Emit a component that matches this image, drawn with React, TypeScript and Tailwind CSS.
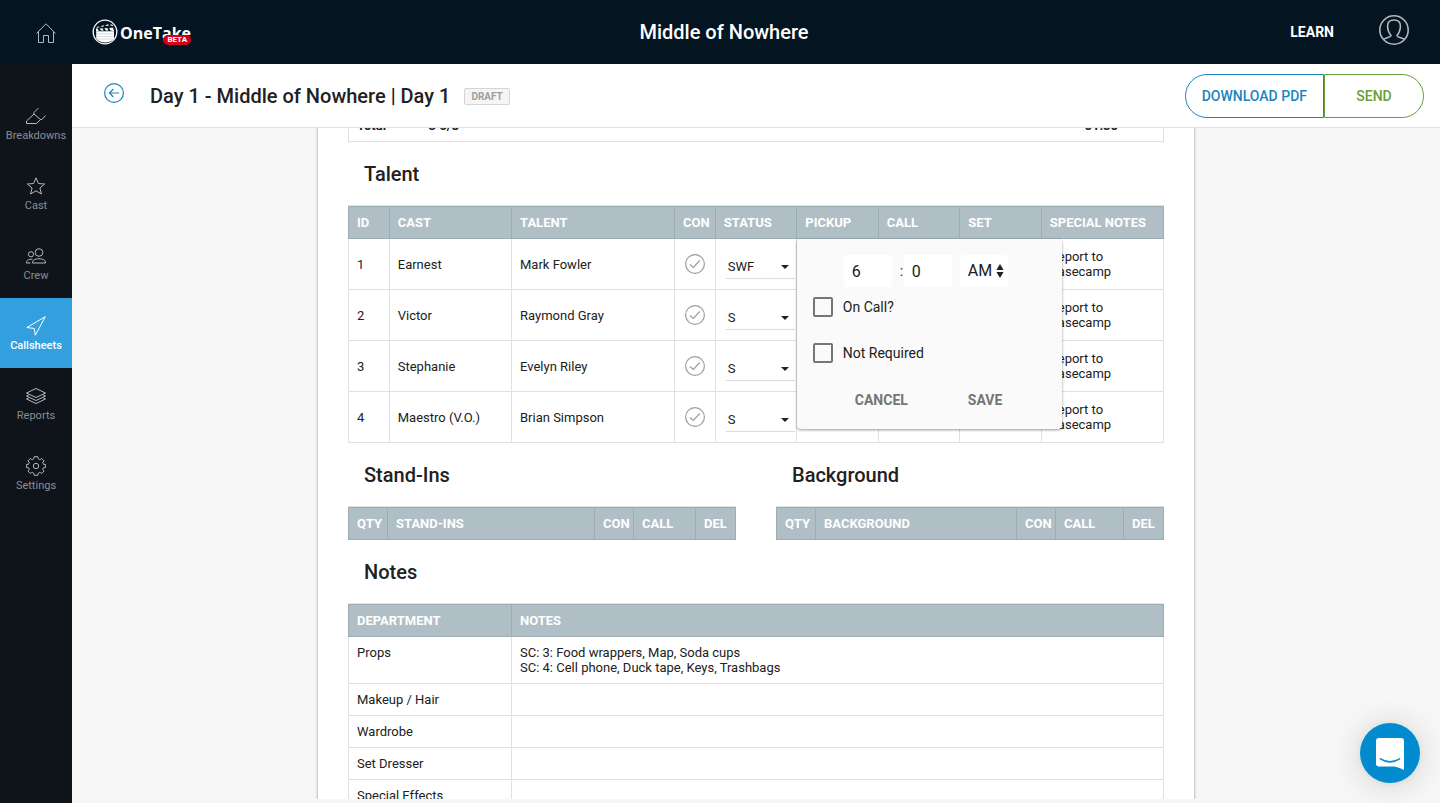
import { useState, type ReactNode } from "react";
import clsx from "clsx";

type NavItem = { label: string; icon: ReactNode };

const iconProps = {
  viewBox: "0 0 20 20",
  fill: "none",
  stroke: "currentColor",
  strokeWidth: 1,
  className: "h-5 w-5",
  "aria-hidden": true,
} as const;

const navItems: NavItem[] = [
  {
    label: "Breakdowns",
    icon: (
      <svg {...iconProps}>
        <path d="M12.5 2 L8 6.5 V8 L0.5 15 V17.5 H10.5 L14.5 13.5 H16 L19.5 9.5 M8 8 L14.5 13.5" />
      </svg>
    ),
  },
  {
    label: "Cast",
    icon: (
      <svg {...iconProps}>
        <path d="M10 1.8 L12.4 7.5 L18.6 8 L13.9 12 L15.4 18 L10 14.8 L4.6 18 L6.1 12 L1.4 8 L7.6 7.5 Z" />
      </svg>
    ),
  },
  {
    label: "Crew",
    icon: (
      <svg {...iconProps}>
        <circle cx="13" cy="6.5" r="3.8" />
        <circle cx="5" cy="8.3" r="2.6" />
        <path d="M6.5 17 C6.5 14 9 12.8 13 12.8 S19.5 14 19.5 17 Z" />
        <path d="M4.5 17 H0.5 C0.5 14.3 2 13.2 6.5 13.2" />
      </svg>
    ),
  },
  {
    label: "Callsheets",
    icon: (
      <svg {...iconProps}>
        <path d="M19.3 0.7 L0.8 11.5 L8.3 12.5 L9.3 19.3 Z" />
      </svg>
    ),
  },
  {
    label: "Reports",
    icon: (
      <svg {...iconProps}>
        <path d="M10 2.5 L19.5 7 L10 11.5 L0.5 7 Z" />
        <path d="M3 8.7 L0.5 10 L10 14.5 L19.5 10 L17 8.7 M3 11.7 L0.5 13 L10 17.5 L19.5 13 L17 11.7" />
      </svg>
    ),
  },
  {
    label: "Settings",
    icon: (
      <svg {...iconProps}>
        <circle cx="10" cy="10" r="2.7" />
        <path d="M8.2 0.7 H11.8 Q11.8 3.4 13.6 3.6 Q15 3.6 15.6 2.4 L18 4.8 Q16.2 6.4 17 7.8 Q17.6 8.6 19.4 8.4 V11.6 Q17.6 11.4 17 12.2 Q16.2 13.6 18 15.2 L15.6 17.6 Q15 16.4 13.6 16.4 Q11.8 16.6 11.8 19.3 H8.2 Q8.2 16.6 6.4 16.4 Q5 16.4 4.4 17.6 L2 15.2 Q3.8 13.6 3 12.2 Q2.4 11.4 0.6 11.6 V8.4 Q2.4 8.6 3 7.8 Q3.8 6.4 2 4.8 L4.4 2.4 Q5 3.6 6.4 3.6 Q8.2 3.4 8.2 0.7 Z" />
      </svg>
    ),
  },
];

const talent = [
  { id: 1, cast: "Earnest", name: "Mark Fowler", status: "SWF" },
  { id: 2, cast: "Victor", name: "Raymond Gray", status: "S" },
  { id: 3, cast: "Stephanie", name: "Evelyn Riley", status: "S" },
  { id: 4, cast: "Maestro (V.O.)", name: "Brian Simpson", status: "S" },
];

const notes = [
  {
    department: "Props",
    lines: [
      "SC: 3: Food wrappers, Map, Soda cups",
      "SC: 4: Cell phone, Duck tape, Keys, Trashbags",
    ],
  },
  { department: "Makeup / Hair", lines: [] },
  { department: "Wardrobe", lines: [] },
  { department: "Set Dresser", lines: [] },
  { department: "Special Effects", lines: [] },
];

function Logo() {
  return (
    <a href="#projects" aria-label="OneTake beta" className="relative flex items-center">
      <svg viewBox="0 0 26 26" className="h-[26px] w-[26px]" aria-hidden>
        <circle cx="13" cy="13" r="11.8" fill="none" stroke="#fff" strokeWidth="1.3" />
        <path d="M4.2 12.2 H22 V20 Q18 23.5 13 23.5 Q7.5 23.5 4.2 19.5 Z" fill="#fff" />
        <path d="M4.5 14.8 H21.5 M4.5 17.4 H21.5 M5 20 H21" stroke="#b9c0c6" strokeWidth="0.6" />
        <path
          d="M4 12.2 V9.6 L5.6 9.4 L7 12.2 Z M9 11.6 L7.6 9.4 L10.4 9.2 L11.8 11.6 Z M13.8 11.6 L12.4 9.2 L15.2 9 L16.6 11.6 Z M18.4 11.6 L17.2 9 L21 8.6 L22 12.2 Z"
          fill="#fff"
        />
        <path
          d="M4 8.2 L6 7.4 L8 8 L6 8.8 Z M8.6 7.4 L10.4 6.4 L12.6 6.6 L11 7.8 Z M13.4 6.8 L15 5.6 L17.2 5.8 L15.6 7 Z M18 6.2 L19 5.2 L21 6 V7 Z"
          fill="#fff"
        />
      </svg>
      <span className="ml-0.5 pt-0.5 font-['Open_Sans',sans-serif] text-base leading-6 font-bold text-white">
        OneTake
      </span>
      <span className="absolute right-0 bottom-0 rounded-full bg-[#d0021b] px-1 text-[8px] leading-[10px] font-bold text-white">
        BETA
      </span>
    </a>
  );
}

function TopBar() {
  return (
    <header className="grid h-16 shrink-0 grid-cols-[1fr_auto_1fr] items-center bg-[#041421] pl-2">
      <div className="flex items-center gap-9 pl-7">
        <a href="#home" aria-label="Home" className="pt-0.5 text-[#b4b9bd]">
          <svg {...iconProps}>
            <path d="M0.5 10.5 L10 0.8 L19.5 10.5 M2.5 8.5 V19.5 H7.5 V12.5 H12.5 V19.5 H17.5 V8.5" />
          </svg>
        </a>
        <Logo />
      </div>
      <h1 className="text-xl font-medium text-white">Middle of Nowhere</h1>
      <div className="flex items-center justify-end gap-[45px] pr-[31px] pb-1">
        <a href="#learn" className="pt-1 text-sm font-bold text-white">
          LEARN
        </a>
        <button type="button" aria-label="Account" className="text-[#b4b9bd]">
          <svg
            viewBox="0 0 30 30"
            fill="none"
            stroke="currentColor"
            strokeWidth="1.6"
            className="h-[30px] w-[30px]"
            aria-hidden
          >
            <circle cx="15" cy="15" r="14.2" />
            <path d="M4.5 24.5 C6.5 22.8 12 22.4 12 20.5 C9.5 17.5 8.6 14.5 8.6 11 C8.6 7.2 11.2 5 15 5 S21.4 7.2 21.4 11 C21.4 14.5 20.5 17.5 18 20.5 C18 22.4 23.5 22.8 25.5 24.5" />
          </svg>
        </button>
      </div>
    </header>
  );
}

function SideNav({ active }: { active: string }) {
  return (
    <nav className="w-18 shrink-0 bg-[#0f141b] pt-6">
      {navItems.map((item) => (
        <a
          key={item.label}
          href={`#${item.label.toLowerCase()}`}
          className={clsx(
            "flex h-[70px] flex-col items-center justify-center gap-0.5 pt-1 text-[11px] leading-4",
            item.label === active ? "bg-[#349fde] font-medium text-white" : "text-[#8b8e91]"
          )}
        >
          <span className={item.label === active ? "text-white" : "text-[#b4b9bd]"}>{item.icon}</span>
          {item.label}
        </a>
      ))}
    </nav>
  );
}

function PageBar() {
  return (
    <div className="flex h-16 shrink-0 items-center border-b border-[#e0e0e0] bg-white pr-4 pl-8">
      <button type="button" aria-label="Back" className="mb-1.5 text-[#1c84bd]">
        <svg {...iconProps}>
          <circle cx="10" cy="10" r="9.4" strokeWidth="1.2" />
          <path d="M15 10 H5.6 M9.4 6 L5.4 10 L9.4 14" strokeWidth="1.2" />
        </svg>
      </button>
      <h2 className="ml-[26px] text-xl font-medium">Day 1 - Middle of Nowhere | Day 1</h2>
      <span className="mt-0.5 ml-3.5 rounded-xs border border-[#d5d5d5] bg-[#f5f5f5] px-1.5 text-[10px] leading-[15px] font-bold text-[#9e9e9e]">
        DRAFT
      </span>
      <div className="ml-auto flex h-11 text-sm font-medium">
        <button type="button" className="rounded-l-[22px] border border-[#1c84bd] px-4 text-[#1c84bd]">
          DOWNLOAD PDF
        </button>
        <button type="button" className="w-[100px] rounded-r-[22px] border border-[#689f38] text-[#689f38]">
          SEND
        </button>
      </div>
    </div>
  );
}

function SectionTitle({ children }: { children: ReactNode }) {
  return <h3 className="px-4 pt-5 pb-[19px] text-xl leading-6 font-medium">{children}</h3>;
}

function HeadRow({ columns }: { columns: [string, string][] }) {
  return (
    <thead>
      <tr>
        {columns.map(([label, width]) => (
          <th
            key={label}
            scope="col"
            className={clsx(
              "border border-[#9dadb4] bg-[#b0bec5] py-2 pl-2 text-left font-bold whitespace-nowrap text-white",
              width
            )}
          >
            {label}
          </th>
        ))}
      </tr>
    </thead>
  );
}

const tableClass = "w-full table-fixed border-collapse text-[13px] leading-[15px]";
const cellClass = "border border-[#e0e0e0] px-2 py-2";

function StatusSelect({ value, label }: { value: string; label: string }) {
  return (
    <div className="relative">
      <select
        aria-label={label}
        defaultValue={value}
        className="block h-[29px] w-full appearance-none border-b border-[#dcdcdc] bg-transparent pt-1.5 pl-0.5 outline-none"
      >
        <option>SWF</option>
        <option>S</option>
        <option>W</option>
      </select>
      <svg viewBox="0 0 8 4" className="pointer-events-none absolute top-[15px] right-1.5 h-1 w-2" aria-hidden>
        <path d="M0 0 H8 L4 4 Z" fill="#212121" />
      </svg>
    </div>
  );
}

function PickupMenu({ onClose }: { onClose: () => void }) {
  const timeInput = "h-8 w-12 rounded-xs bg-white pl-2 text-base outline-none";
  return (
    <form
      onSubmit={(e) => e.preventDefault()}
      className="absolute top-[33px] left-[55%] w-[265px] rounded-sm bg-[#fafafa] px-4 pt-4 pb-[11px] text-sm shadow-[0_1px_3px_rgba(0,0,0,0.4)]"
    >
      <div className="flex items-center pl-[31px] text-base">
        <input aria-label="Hour" defaultValue="6" className={timeInput} />
        <span className="w-3 pl-2 text-sm">:</span>
        <input aria-label="Minute" defaultValue="0" className={timeInput} />
        <div className="relative ml-2">
          <select
            aria-label="AM or PM"
            className="block h-8 w-12 appearance-none rounded-sm bg-white pl-2 outline-none"
          >
            <option>AM</option>
            <option>PM</option>
          </select>
          <svg
            viewBox="0 0 8 14"
            className="pointer-events-none absolute top-[9px] right-1 h-3.5 w-2"
            aria-hidden
          >
            <path d="M4 0 L7.6 6 H0.4 Z M4 14 L0.4 8 H7.6 Z" fill="#212121" />
          </svg>
        </div>
      </div>
      <div className="mt-2.5 flex flex-col gap-[26px]">
        {["On Call?", "Not Required"].map((text) => (
          <label key={text} className="flex items-center gap-2.5">
            <input
              type="checkbox"
              className="h-5 w-5 appearance-none rounded-xs border-2 border-[#757575] checked:bg-[#757575]"
            />
            <span className="leading-5">{text}</span>
          </label>
        ))}
      </div>
      <div className="mt-[19px] flex h-9 items-center gap-15 pl-[42px] font-bold text-[#757575]">
        <button type="button" onClick={onClose}>
          CANCEL
        </button>
        <button type="submit">SAVE</button>
      </div>
    </form>
  );
}

function TalentTable() {
  const [menuOpen, setMenuOpen] = useState(true);
  return (
    <div className="relative border-t border-[#dfe4e6]">
      <table className={tableClass}>
        <HeadRow
          columns={[
            ["ID", "w-[5%]"],
            ["CAST", "w-[15%]"],
            ["TALENT", "w-[20%]"],
            ["CON", "w-[5%]"],
            ["STATUS", "w-[10%]"],
            ["PICKUP", "w-[10%]"],
            ["CALL", "w-[10%]"],
            ["SET", "w-[10%]"],
            ["SPECIAL NOTES", "w-[15%]"],
          ]}
        />
        <tbody>
          {talent.map((row) => (
            <tr key={row.id} className="h-[51px]">
              <td className={cellClass}>{row.id}</td>
              <td className={cellClass}>{row.cast}</td>
              <td className={cellClass}>{row.name}</td>
              <td className="border border-[#e0e0e0]">
                <svg
                  viewBox="0 0 20 20"
                  fill="none"
                  stroke="#9e9e9e"
                  className="mx-auto h-5 w-5"
                  aria-label="Not confirmed"
                >
                  <circle cx="10" cy="10" r="9.4" strokeWidth="1.2" />
                  <path d="M5 10.5 L8.3 13.5 L14.8 6.5" strokeWidth="1.2" />
                </svg>
              </td>
              <td className="border border-[#e0e0e0] pr-px pl-2.5">
                <StatusSelect value={row.status} label={`Status of ${row.name}`} />
              </td>
              <td className={cellClass}>
                <button
                  type="button"
                  aria-label={`Edit pickup for ${row.name}`}
                  onClick={() => setMenuOpen(true)}
                />
              </td>
              <td className={cellClass} />
              <td className={cellClass} />
              <td className={cellClass}>
                Report to
                <br />
                Basecamp
              </td>
            </tr>
          ))}
        </tbody>
      </table>
      {menuOpen && <PickupMenu onClose={() => setMenuOpen(false)} />}
    </div>
  );
}

function HeadCountTable({ title, callWidth }: { title: string; callWidth: string }) {
  return (
    <section>
      <SectionTitle>{title}</SectionTitle>
      <div className="border-t border-[#dfe4e6]">
        <table className={tableClass}>
          <HeadRow
            columns={[
              ["QTY", "w-[39px]"],
              [title.toUpperCase(), ""],
              ["CON", "w-[39px]"],
              ["CALL", callWidth],
              ["DEL", "w-10"],
            ]}
          />
        </table>
      </div>
    </section>
  );
}

function NotesTable() {
  return (
    <div className="border-t border-[#dfe4e6]">
      <table className={tableClass}>
        <HeadRow
          columns={[
            ["DEPARTMENT", "w-[20%]"],
            ["NOTES", ""],
          ]}
        />
        <tbody>
          {notes.map((note) => (
            <tr key={note.department}>
              <td className={clsx(cellClass, "align-top")}>{note.department}</td>
              <td className={cellClass}>
                {note.lines.map((line) => (
                  <p key={line}>{line}</p>
                ))}
              </td>
            </tr>
          ))}
        </tbody>
      </table>
    </div>
  );
}

export default function App() {
  return (
    <div className="flex h-screen flex-col overflow-hidden bg-[#f7f7f7] font-[Roboto,sans-serif] text-[#212121]">
      <TopBar />
      <div className="flex min-h-0 flex-1">
        <SideNav active="Callsheets" />
        <div className="flex min-w-0 flex-1 flex-col pb-1">
          <PageBar />
          <main className="min-h-0 flex-1 overflow-y-auto [scrollbar-width:none]">
            <div className="mx-auto -mt-[19px] max-w-[876px] bg-white px-[30px] pb-8 shadow-[0_1px_3px_rgba(0,0,0,0.4)]">
              <table className={tableClass}>
                <tbody>
                  <tr className="border border-[#e0e0e0] font-bold">
                    <td className="w-[72px] py-2 pl-2">Total</td>
                    <td className="py-2 pl-2">3 6/8</td>
                    <td className="w-[87px] py-2 pl-2">01:30</td>
                  </tr>
                </tbody>
              </table>
              <SectionTitle>Talent</SectionTitle>
              <TalentTable />
              <div className="grid grid-cols-2 gap-10">
                <HeadCountTable title="Stand-Ins" callWidth="w-[62px]" />
                <HeadCountTable title="Background" callWidth="w-[68px]" />
              </div>
              <SectionTitle>Notes</SectionTitle>
              <NotesTable />
            </div>
          </main>
        </div>
      </div>
      <button
        type="button"
        aria-label="Open chat"
        className="fixed right-5 bottom-5 flex h-15 w-15 items-center justify-center rounded-full bg-[#038bcf] shadow-[0_1px_6px_rgba(0,0,0,0.06),0_2px_32px_rgba(0,0,0,0.16)]"
      >
        <svg viewBox="0 0 28 32" className="mt-0.5 h-8 w-7" aria-hidden>
          <path d="M3 0 H25 Q28 0 28 3 V32 Q24 29.5 18.5 28.5 H3 Q0 28.5 0 25.5 V3 Q0 0 3 0 Z" fill="#fff" />
          <path d="M4.5 20.8 Q14 27 23.5 20.8" fill="none" stroke="#038bcf" strokeWidth="1.6" strokeLinecap="round" />
        </svg>
      </button>
    </div>
  );
}
